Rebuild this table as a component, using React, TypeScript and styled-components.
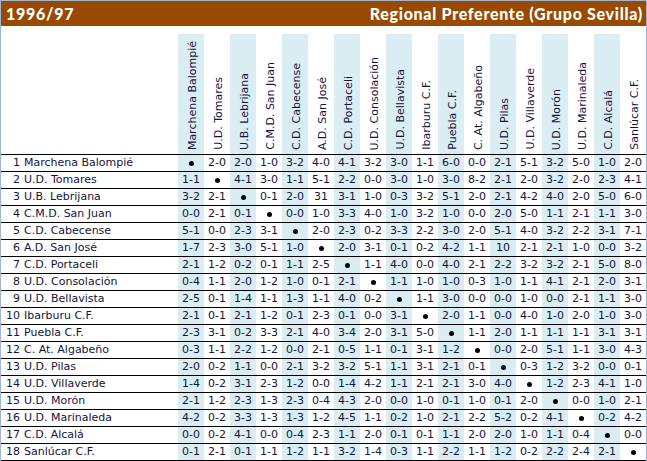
import React from "react";
import styled, { createGlobalStyle } from "styled-components";

const GlobalStyle = createGlobalStyle`
  html, body { margin: 0; padding: 0; background: #ffffff; }
`;

const teams = [
  "Marchena Balompié",
  "U.D. Tomares",
  "U.B. Lebrijana",
  "C.M.D. San Juan",
  "C.D. Cabecense",
  "A.D. San José",
  "C.D. Portaceli",
  "U.D. Consolación",
  "U.D. Bellavista",
  "Ibarburu C.F.",
  "Puebla C.F.",
  "C. At. Algabeño",
  "U.D. Pilas",
  "U.D. Villaverde",
  "U.D. Morón",
  "U.D. Marinaleda",
  "C.D. Alcalá",
  "Sanlúcar C.F.",
];

const results: string[][] = [
  "* 2-0 2-0 1-0 3-2 4-0 4-1 3-2 3-0 1-1 6-0 0-0 2-1 5-1 3-2 5-0 1-0 2-0",
  "1-1 * 4-1 3-0 1-1 5-1 2-2 0-0 3-0 1-0 3-0 8-2 2-1 2-0 3-2 2-0 2-3 4-1",
  "3-2 2-1 * 0-1 2-0 31 3-1 1-0 0-3 3-2 5-1 2-0 2-1 4-2 4-0 2-0 5-0 6-0",
  "0-0 2-1 0-1 * 0-0 1-0 3-3 4-0 1-0 3-2 1-0 0-0 2-0 5-0 1-1 2-1 1-1 3-0",
  "5-1 0-0 2-3 3-1 * 2-0 2-3 0-2 3-3 2-2 3-0 2-0 5-1 4-0 3-2 2-2 3-1 7-1",
  "1-7 2-3 3-0 5-1 1-0 * 2-0 3-1 0-1 0-2 4-2 1-1 10 2-1 2-1 1-0 0-0 3-2",
  "2-1 1-2 0-2 0-1 1-1 2-5 * 1-1 4-0 0-0 4-0 2-1 2-2 3-2 3-2 2-1 5-0 8-0",
  "0-4 1-1 2-0 1-2 1-0 0-1 2-1 * 1-1 1-0 1-0 0-3 1-0 1-1 4-1 2-1 2-0 3-1",
  "2-5 0-1 1-4 1-1 1-3 1-1 4-0 0-2 * 1-1 3-0 0-0 0-0 1-0 0-0 2-1 1-1 3-0",
  "2-1 0-1 2-1 1-2 0-1 2-3 0-1 0-0 3-1 * 2-0 1-1 0-0 4-0 1-0 2-0 1-0 3-0",
  "2-3 3-1 0-2 3-3 2-1 4-0 3-4 2-0 3-1 5-0 * 1-1 2-0 1-1 1-1 1-1 3-1 3-1",
  "0-3 1-1 2-2 1-2 0-0 2-1 0-5 1-1 0-1 3-1 1-2 * 0-0 2-0 5-1 1-1 3-0 4-3",
  "2-0 0-2 1-1 0-0 2-1 3-2 3-2 5-1 1-1 3-1 2-1 0-1 * 0-3 1-2 3-2 0-0 0-1",
  "1-4 0-2 3-1 2-3 1-2 0-0 1-4 4-2 1-1 2-1 2-1 3-0 4-0 * 1-2 2-3 4-1 1-0",
  "2-1 1-2 2-3 1-3 2-3 0-4 4-3 2-0 0-0 1-0 0-1 1-0 0-1 2-0 * 0-0 1-0 2-1",
  "4-2 0-2 3-3 1-3 1-3 1-2 4-5 1-1 0-2 1-0 2-1 2-2 5-2 0-2 4-1 * 0-2 4-2",
  "0-0 0-2 4-1 0-0 0-4 2-3 1-1 2-0 0-1 0-1 1-1 2-0 2-0 1-0 1-1 0-4 * 0-0",
  "0-1 2-1 0-1 1-1 1-2 1-1 3-2 1-4 0-3 1-1 2-2 1-1 1-2 0-2 2-2 2-4 2-1 *",
].map((r) => r.split(" "));

const COLS = "177px repeat(18, 26px)";

const Page = styled.div`
  width: 647px;
  box-sizing: border-box;
  border: 1px solid #a3b5cc;
  border-bottom: none;
  background: #ffffff;
  font-family: "DejaVu Sans", Verdana, sans-serif;
  font-size: 11px;
  color: #14143a;
`;

const TitleBar = styled.div`
  height: 25px;
  display: flex;
  align-items: center;
  justify-content: space-between;
  padding: 0 3px 0 5px;
  background: #994a00;
  color: #ffffff;
  font-family: Lato, "DejaVu Sans", sans-serif;
  font-weight: 900;
  font-size: 16px;
  letter-spacing: 0.7px;
`;

const Table = styled.div`
  padding-top: 8px;
`;

const HeaderRow = styled.div`
  display: grid;
  grid-template-columns: ${COLS};
  height: 121px;
  box-sizing: border-box;
  border-bottom: 1px solid #000000;
`;

const HeaderCell = styled.div<{ $shaded: boolean }>`
  display: flex;
  align-items: flex-end;
  justify-content: center;
  padding: 0 0 4px 3px;
  background: ${(p) => (p.$shaded ? "#daedf3" : "transparent")};
`;

const VerticalLabel = styled.span`
  writing-mode: vertical-rl;
  transform: rotate(180deg);
  white-space: nowrap;
  line-height: 13px;
`;

const BodyRow = styled.div`
  display: grid;
  grid-template-columns: ${COLS};
  height: 17px;
  box-sizing: border-box;
  border-bottom: 1px solid #000000;
`;

const NameCell = styled.div`
  display: flex;
  align-items: center;
  line-height: 16px;
  white-space: nowrap;
`;

const Position = styled.span`
  width: 19px;
  text-align: right;
  margin-right: 4px;
`;

const ScoreCell = styled.div<{ $shaded: boolean }>`
  display: flex;
  align-items: center;
  justify-content: center;
  line-height: 16px;
  white-space: nowrap;
  background: ${(p) => (p.$shaded ? "#daedf3" : "transparent")};
`;

const Dot = styled.span`
  width: 5px;
  height: 5px;
  border-radius: 50%;
  background: #000000;
`;

export default function App() {
  return (
    <>
      <GlobalStyle />
      <Page>
        <TitleBar>
          <span>1996/97</span>
          <span>Regional Preferente (Grupo Sevilla)</span>
        </TitleBar>
        <Table>
          <HeaderRow>
            <div />
            {teams.map((t, i) => (
              <HeaderCell key={t} $shaded={i % 2 === 0}>
                <VerticalLabel>{t}</VerticalLabel>
              </HeaderCell>
            ))}
          </HeaderRow>
          {teams.map((t, r) => (
            <BodyRow key={t}>
              <NameCell>
                <Position>{r + 1}</Position>
                {t}
              </NameCell>
              {results[r].map((s, c) => (
                <ScoreCell key={c} $shaded={c % 2 === 0}>
                  {s === "*" ? <Dot /> : s}
                </ScoreCell>
              ))}
            </BodyRow>
          ))}
        </Table>
      </Page>
    </>
  );
}
